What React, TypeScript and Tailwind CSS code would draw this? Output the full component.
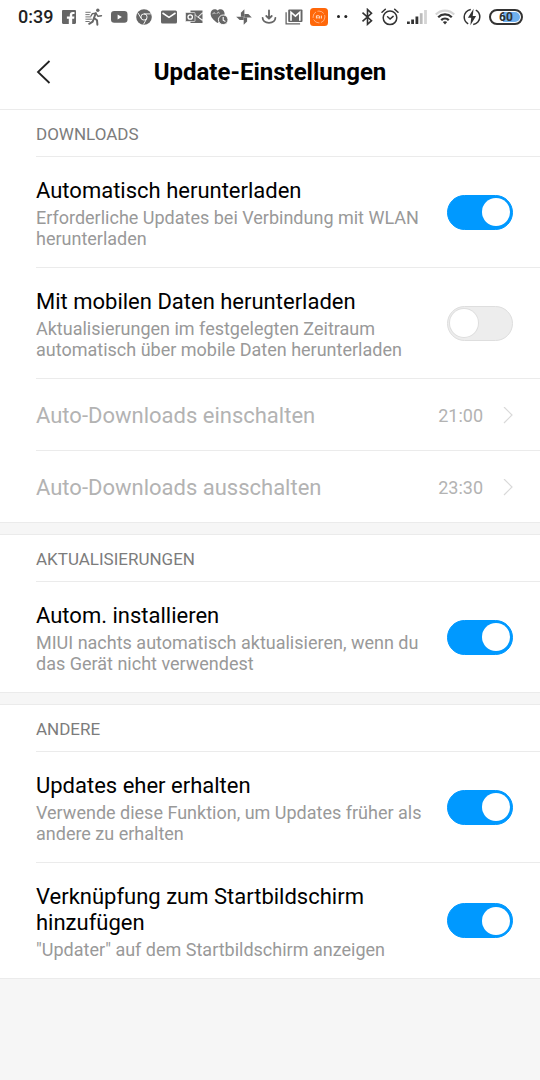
import React, { useId, useState } from 'react';

const ICON = 'h-[18px] w-[18px] shrink-0';

const AppIcons: React.FC = () => (
  <div className="flex items-center gap-[7px] text-[#666]">
    {/* Facebook */}
    <svg className={ICON} viewBox="0 0 18 18" fill="currentColor">
      <path d="M3.2 2h11.6c.7 0 1.2.5 1.2 1.2v11.6c0 .7-.5 1.2-1.2 1.2h-2.600v-5.300h1.900l.3-2.200h-2.200V7.200c0-.7.3-1.100 1.100-1.100h1.200V4.100c-.3 0-1-.1-1.700-.1-1.900 0-3 1.100-3 2.900v1.600H6.900v2.200h1.900V16H3.200C2.500 16 2 15.500 2 14.800V3.200C2 2.500 2.500 2 3.200 2z" />
    </svg>
    {/* Runner */}
    <svg className={ICON} viewBox="0 0 18 18" fill="none" stroke="currentColor" strokeLinecap="round" strokeLinejoin="round">
      <circle cx="12.800" cy="2.300" r="1.700" fill="currentColor" stroke="none" />
      <path d="M10.800 5.200 9 10l3 2.200.4 4.500M9 10l-1.300 3.600-3.500 2.200" strokeWidth="2" />
      <path d="M10.800 5.200 7.400 5.600 6 8M11.200 5.600l1.800 2.700 3.500-.6" strokeWidth="1.400" />
      <path d="M.8 4.300h4.500M.8 6.600h3.500M.8 8.900h4.900M.8 11.200h5.700M.8 13.500h3.500" strokeWidth=".9" />
    </svg>
    {/* YouTube */}
    <svg className={ICON} viewBox="0 0 18 18">
      <rect x="1" y="3" width="16.500" height="11.800" rx="3.200" fill="currentColor" />
      <path d="M7.600 6.400v5l4.300-2.500z" fill="#fff" />
    </svg>
    {/* Chrome */}
    <svg className={ICON} viewBox="0 0 18 18">
      <circle cx="9" cy="9" r="7.800" fill="currentColor" />
      <circle cx="9" cy="9" r="3.100" fill="none" stroke="#fff" strokeWidth=".9" />
      <path d="M9 5.900h6.800M6.300 10.600 3 5M11.700 10.600 8.500 16.400" stroke="#fff" strokeWidth=".9" />
    </svg>
    {/* Mail */}
    <svg className={ICON} viewBox="0 0 18 18">
      <rect x="1" y="2.500" width="16" height="13" rx="1.500" fill="currentColor" />
      <path d="m2.500 5 6.500 4.300L15.500 5" fill="none" stroke="#fff" strokeWidth="1.500" />
    </svg>
    {/* Outlook */}
    <svg className={ICON} viewBox="0 0 18 18">
      <path d="M5.500 2.500h12v2.200L13 9.200l4.500 3.300v2.500h-12z" fill="currentColor" />
      <path d="M17.500 5.600v6L13.700 9z" fill="currentColor" />
      <path d="m9.500 6.300 3.300 2.800 4.500-4.600M13 9.200l4.500 3.500" fill="none" stroke="#fff" strokeWidth=".8" />
      <rect x=".5" y="4.500" width="9.500" height="9" rx=".6" fill="currentColor" stroke="#fff" strokeWidth=".6" />
      <circle cx="5.200" cy="9" r="2.200" fill="none" stroke="#fff" strokeWidth="1.300" />
    </svg>
    {/* Heart with clock */}
    <svg className={ICON} viewBox="0 0 18 18">
      <path d="M7.500 15C3.500 12 .6 9.300.6 5.700.6 3 2.400 1.200 4.700 1.200c1.200 0 2.200.5 2.900 1.300.7-.8 1.700-1.300 2.900-1.300 2.300 0 4.100 1.800 4.100 4.500 0 3.600-3.100 6.500-7.100 9.300z" fill="currentColor" />
      <path d="M2.800 6.200c.5-2 2.200-2 2.400-.3M7 5.800c.5-2 2.200-2 2.400-.3" fill="none" stroke="#fff" strokeWidth=".7" />
      <circle cx="13.200" cy="11.800" r="4.800" fill="currentColor" stroke="#fff" strokeWidth=".9" />
      <path d="M13.200 9v3.200l2.200 1.200" fill="none" stroke="#fff" strokeWidth="1.100" />
    </svg>
    {/* Photos */}
    <svg className={ICON} viewBox="0 0 18 18" fill="currentColor">
      <path d="M9.400 1.200v7.500H5.900V4.700z" />
      <path d="M16.800 9.400H9.400V5.900h4z" />
      <path d="M8.700 16.800V9.400h3.400v4z" />
      <path d="M1.200 8.700h7.500v3.400h-4z" />
    </svg>
    {/* Download */}
    <svg className={ICON} viewBox="0 0 18 18" fill="none" stroke="currentColor" strokeWidth="1.800" strokeLinecap="round" strokeLinejoin="round">
      <path d="M9 2.500v7.600M6.300 8 9 10.700 11.700 8M2.600 9.800c0 2.700 2.400 5 6.400 5s6.400-2.300 6.400-5" />
    </svg>
    {/* Gmail stack */}
    <svg className={ICON} viewBox="0 0 18 18" fill="none">
      <path d="M1.100 4.300v11.600h14" stroke="currentColor" strokeWidth="1.300" />
      <rect x="3.200" y="1.500" width="14.300" height="12.500" rx="1" fill="currentColor" />
      <path d="M6 12.800V4.200l4.400 4 4.400-4v8.600" stroke="#fff" strokeWidth="1.600" />
    </svg>
    {/* Mi */}
    <svg className={ICON} viewBox="0 0 18 18" fill="none">
      <rect width="18" height="18" rx="3.500" fill="#ff6709" />
      <circle cx="9" cy="9" r="5.900" stroke="#ffc09a" strokeWidth=".8" strokeDasharray="7 1.500" />
      <path d="M6.400 10.500V7.800h2.400c.5 0 .8.300.8.800v1.900M8 9v1.500M11.400 7.600v2.900" stroke="#fff" strokeWidth=".8" />
    </svg>
    {/* More notifications */}
    <svg className={ICON} viewBox="0 0 18 18" fill="#222">
      <circle cx="3.500" cy="8.500" r="1.500" />
      <circle cx="10.800" cy="8.500" r="1.500" />
    </svg>
  </div>
);

const SystemIcons: React.FC = () => (
  <div className="ml-auto flex items-center gap-2 text-[#333]">
    {/* Bluetooth */}
    <svg className="h-[18px] w-3" viewBox="0 0 12 18" fill="none" stroke="currentColor" strokeWidth="1.600">
      <path d="m1.500 4.700 9 8-4 3.600V1.500l4 3.800-9 8" />
    </svg>
    {/* Alarm */}
    <svg className={ICON} viewBox="0 0 18 18" fill="none" stroke="currentColor" strokeWidth="1.500" strokeLinecap="round">
      <circle cx="9" cy="9.800" r="6.800" />
      <path d="m6.600 8.700 2.500 2.300 3-2.600M1 4.300 4.300 1.200M17 4.300l-3.300-3.100" />
    </svg>
    {/* Signal */}
    <svg className="h-[18px] w-5" viewBox="0 0 20 18" fill="currentColor">
      <path d="M0 13.500h2.800V16H0zM4.200 11.500H7V16H4.200zM8.500 8.500h2.800V16H8.500z" />
      <path d="M12.800 5.200h2.800V16h-2.800z" fill="#bbb" />
      <path d="M17.100 2h2.800v14h-2.800z" fill="#d5d5d5" />
    </svg>
    {/* Wi-Fi */}
    <svg className="h-[18px] w-5" viewBox="0 0 20 18" fill="none" strokeWidth="2.300">
      <path d="M.8 6.500C6 1.300 14 1.300 19.200 6.500" stroke="#d5d5d5" />
      <path d="M3.200 9.200c3.800-3.700 9.800-3.700 13.600 0M6.200 12.200c2.200-2.100 5.400-2.100 7.600 0" stroke="currentColor" />
      <path d="M7.800 14c1.300-1.100 3.100-1.100 4.400 0L10 16.500z" fill="currentColor" />
    </svg>
    {/* Charging */}
    <svg className={ICON} viewBox="0 0 18 18" fill="none">
      <path d="M7.800 1.500C4.100 2 1.200 5.200 1.200 9c0 3 1.600 5.500 4 6.800M10.200 16.500c3.700-.5 6.600-3.700 6.600-7.500 0-3-1.600-5.500-4-6.800" stroke="currentColor" strokeWidth="1.500" />
      <path d="M10.600.8 4.900 9.800h3.300l-.8 7.400 5.700-9.200H9.700z" fill="currentColor" />
    </svg>
    {/* Battery */}
    <div className="flex h-4 w-[34px] items-center justify-center rounded-full border-2 border-[#333] bg-white p-px">
      <span className="flex h-full w-full items-center justify-center rounded-full bg-linear-to-r from-white from-40% to-[#6fb0ee] to-40% text-[12px] leading-none font-bold">
        60
      </span>
    </div>
  </div>
);

const StatusBar: React.FC = () => (
  <div className="flex h-[34px] items-center pr-[17px] pl-[18px]">
    <span className="w-[42px] text-[18px] leading-5 font-medium text-[#222]">0:39</span>
    <AppIcons />
    <SystemIcons />
  </div>
);

const Section: React.FC<{ title: string; children: React.ReactNode }> = ({ title, children }) => (
  <section className="border-y border-[#ebebeb] bg-white">
    <h2 className="flex h-[46px] items-center pt-px pl-9 text-[17px] leading-5 text-[#7c7c7c]">{title}</h2>
    {children}
  </section>
);

interface SwitchRowProps {
  title: string;
  summary: string;
  defaultChecked?: boolean;
}

const SwitchRow: React.FC<SwitchRowProps> = ({ title, summary, defaultChecked = false }) => {
  const id = useId();
  const [checked, setChecked] = useState(defaultChecked);

  return (
    <div className="ml-9 flex items-center gap-5 border-t border-[#ebebeb] pr-[27px]">
      <label htmlFor={id} className="flex-1 pt-[21px] pb-[18px]">
        <span className="mb-[3px] block text-[22px] leading-[26px] text-black">{title}</span>
        <span className="block text-[18px] leading-[21px] text-[#999]">{summary}</span>
      </label>
      <input
        id={id}
        type="checkbox"
        role="switch"
        checked={checked}
        onChange={(e) => setChecked(e.target.checked)}
        className="flex h-[35px] w-[66px] shrink-0 appearance-none items-center rounded-full border border-[#dedede] bg-[#ededed] px-[2px] before:h-7 before:w-7 before:rounded-full before:bg-white before:ring-1 before:ring-[#dedede] checked:justify-end checked:border-[#0099ff] checked:bg-[#0099ff] checked:before:ring-0"
      />
    </div>
  );
};

const TimeRow: React.FC<{ title: string; time: string }> = ({ title, time }) => (
  <div className="ml-9 border-t border-[#ebebeb]">
    <button type="button" disabled className="flex h-[71px] w-full items-center pt-[2px] pr-[27px] text-[#b3b3b3]">
      <span className="flex-1 text-left text-[22px] leading-[26px]">{title}</span>
      <span className="text-[18px] leading-[21px]">{time}</span>
      <svg className="ml-5 h-[18px] w-[10px]" viewBox="0 0 10 18" fill="none" stroke="#d9d9d9" strokeWidth="1.200">
        <path d="m1 0 8 8-8 8" />
      </svg>
    </button>
  </div>
);

export default function App() {
  return (
    <div className="min-h-screen bg-[#f6f6f6] font-[Roboto,sans-serif]">
      <header className="bg-white">
        <StatusBar />
        <div className="flex h-[75px] items-center px-9">
          <button type="button" aria-label="Zurück" className="w-9">
            <svg className="h-6 w-4" viewBox="0 0 16 24" fill="none" stroke="#222" strokeWidth="1.800">
              <path d="M13.500 1 2 12l11.500 11" />
            </svg>
          </button>
          <h1 className="flex-1 text-center text-[24px] leading-7 font-bold text-black">Update-Einstellungen</h1>
          <div className="w-9" />
        </div>
      </header>

      <main className="flex flex-col gap-[11px]">
        <Section title="DOWNLOADS">
          <SwitchRow
            title="Automatisch herunterladen"
            summary="Erforderliche Updates bei Verbindung mit WLAN herunterladen"
            defaultChecked
          />
          <SwitchRow
            title="Mit mobilen Daten herunterladen"
            summary="Aktualisierungen im festgelegten Zeitraum automatisch über mobile Daten herunterladen"
          />
          <TimeRow title="Auto-Downloads einschalten" time="21:00" />
          <TimeRow title="Auto-Downloads ausschalten" time="23:30" />
        </Section>

        <Section title="AKTUALISIERUNGEN">
          <SwitchRow
            title="Autom. installieren"
            summary="MIUI nachts automatisch aktualisieren, wenn du das Gerät nicht verwendest"
            defaultChecked
          />
        </Section>

        <Section title="ANDERE">
          <SwitchRow
            title="Updates eher erhalten"
            summary="Verwende diese Funktion, um Updates früher als andere zu erhalten"
            defaultChecked
          />
          <SwitchRow
            title="Verknüpfung zum Startbildschirm hinzufügen"
            summary={'"Updater" auf dem Startbildschirm anzeigen'}
            defaultChecked
          />
        </Section>
      </main>
    </div>
  );
}
